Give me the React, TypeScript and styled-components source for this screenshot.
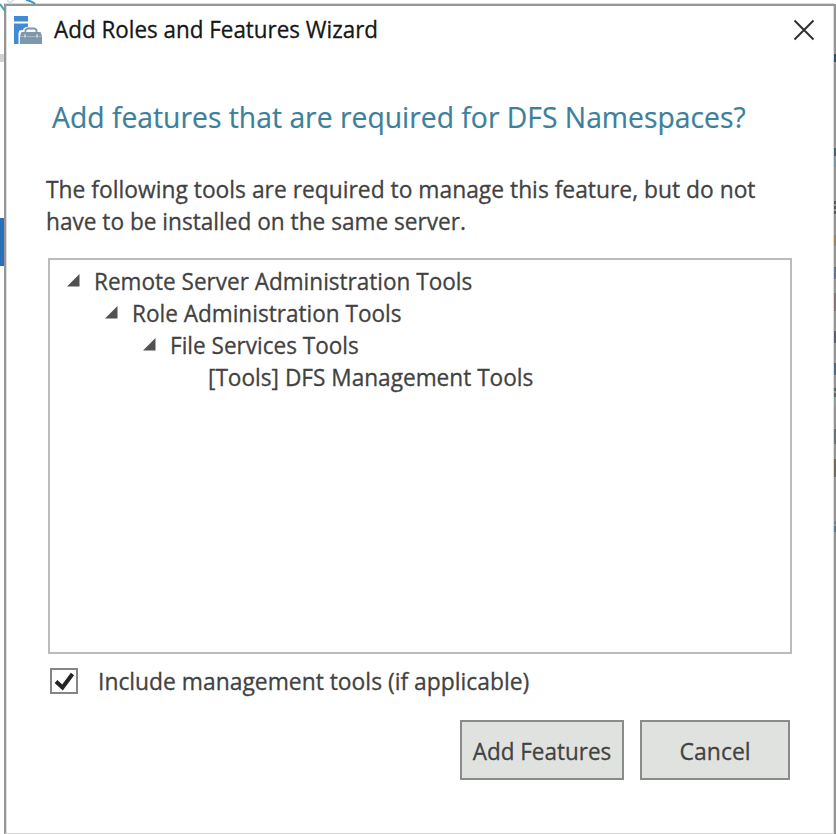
import React, { useState } from 'react';
import styled, { createGlobalStyle } from 'styled-components';

const GlobalStyle = createGlobalStyle`
  * { box-sizing: border-box; }
  body { margin: 0; background: #fff; overflow: hidden; }
`;

const Desktop = styled.div`
  position: relative;
  display: grid;
  grid-template-columns: 4px 830px 2px;
  width: 836px;
  height: 834px;
  overflow: hidden;
  font-family: 'Open Sans', 'Noto Sans', sans-serif;
  background: #fff;
`;

const LeftSliver = styled.div`
  display: flex;
  flex-direction: column;
  padding-top: 54px;
`;

const ToolbarEdge = styled.div`
  height: 8px;
  background: #d0d2d0;
`;

const SelectionEdge = styled.div`
  height: 48px;
  margin-top: 156px;
  background: #2a70b8;
`;

const BackArrow = styled.svg`
  position: absolute;
  left: 0;
  top: 0;
`;

const RightSliver = styled.div`
  margin-top: 4px;
  background: #969696;
`;

const Fleck = styled.div<{ $gap: number; $size: number; $tone: string }>`
  height: ${(p) => p.$size}px;
  margin-top: ${(p) => p.$gap}px;
  background: ${(p) => p.$tone};
`;

const FleckColumn = styled.div`
  display: flow-root;
`;

const Window = styled.section`
  display: flex;
  flex-direction: column;
  margin-top: 4px;
  border: solid #969696;
  border-width: 2px 0 0 2px;
  border-bottom: 1px solid #d4d4d4;
  box-shadow: 0 -1px 0 #dcdcdc, inset 1px 0 0 #dedede, inset -1px 0 0 #dedede;
`;

const TitleBar = styled.header`
  display: flex;
  align-items: flex-start;
  height: 64px;
  padding: 6px 18px 0 7px;
`;

const WizardIcon = styled.svg`
  flex: none;
  margin: 3px 11px 0 0;
`;

const Text = styled.span<{ $fit: number }>`
  display: block;
  font-size: 24px;
  line-height: 32px;
  white-space: nowrap;
  -webkit-text-stroke: 0.3px currentColor;
  transform: scaleX(${(p) => p.$fit});
  transform-origin: left;
`;

const Title = styled.div`
  flex: 1;
  display: flex;
  padding-top: 1px;
  color: #161616;
`;

const CloseButton = styled.button`
  width: 24px;
  height: 24px;
  margin-top: 6px;
  padding: 0;
  border: 0;
  background: none;
`;

const CloseIcon = styled.svg`
  display: block;
`;

const Heading = styled.h1`
  margin: 27px 0 0 46px;
  color: #3c809b;
  font-size: 29px;
  font-weight: 400;
  line-height: 40px;
  white-space: nowrap;
  -webkit-text-stroke: 0.2px currentColor;
  transform: scaleX(0.976);
  transform-origin: left;
`;

const Description = styled.div`
  margin: 36px 0 0 40px;
  color: #424242;
`;

const Tree = styled.ul`
  width: 744px;
  height: 396px;
  margin: 21px 0 0 42px;
  padding: 5px 0 0 16px;
  border: 2px solid #bcbcbc;
  list-style: none;
`;

const TreeRow = styled.li<{ $depth: number }>`
  display: flex;
  height: 32px;
  padding-left: ${(p) => p.$depth * 38}px;
  color: #424242;
`;

const Toggle = styled.svg`
  flex: none;
  margin: 8px 13px 0 0;
`;

const ToggleSpace = styled.span`
  width: 28px;
`;

const Option = styled.div`
  display: flex;
  height: 32px;
  margin: 11px 0 0 44px;
  color: #424242;
`;

const CheckBox = styled.button`
  width: 28px;
  height: 26px;
  margin: 3px 20px 0 0;
  padding: 0;
  border: 2px solid #858585;
  background: #fff;
`;

const CheckMark = styled.svg`
  display: block;
`;

const Actions = styled.footer`
  display: flex;
  justify-content: flex-end;
  gap: 16px;
  margin: 23px 44px 0 0;
`;

const ActionButton = styled.button<{ $width: number }>`
  display: flex;
  justify-content: center;
  width: ${(p) => p.$width}px;
  height: 60px;
  padding: 13px 0 0;
  border: 2px solid #8a8c8a;
  background: #e0e2df;
  color: #424242;
  font-family: inherit;
`;

const ButtonText = styled(Text)`
  transform-origin: center;
`;

const tree = [
  { label: 'Remote Server Administration Tools', fit: 0.939, open: true },
  { label: 'Role Administration Tools', fit: 0.94, open: true },
  { label: 'File Services Tools', fit: 0.939, open: true },
  { label: '[Tools] DFS Management Tools', fit: 0.943, open: false },
];

const flecks: [number, number, string][] = [
  [50, 8, '#2c5564'],
  [86, 8, '#4a6570'],
  [0, 11, '#7797a5'],
  [34, 3, '#555'],
  [2, 3, '#555'],
  [2, 3, '#555'],
  [21, 11, '#9a8460'],
  [21, 12, '#6a7195'],
  [14, 18, '#837578'],
  [20, 12, '#5e5f69'],
  [20, 12, '#536a80'],
  [13, 3, '#5c6663'],
  [2, 4, '#5c6663'],
  [0, 8, '#8ea09b'],
  [24, 15, '#6d7174'],
  [15, 18, '#706a5e'],
  [44, 3, '#718a99'],
  [2, 6, '#667784'],
];

export default function App() {
  const [checked, setChecked] = useState(true);

  return (
    <>
      <GlobalStyle />
      <Desktop>
        <LeftSliver>
          <ToolbarEdge />
          <SelectionEdge />
        </LeftSliver>
        <Window>
          <TitleBar>
            <WizardIcon width="30" height="30" viewBox="0 0 30 30">
              <path d="M1 1H15V6.500H1Z M1 8.500H15V11.500L11 13L10 15L6.500 15.500L5.500 18V29H1Z" fill="#418bd4" />
              <path d="M7 21L8.500 17H27.500L29 21V29H7Z" fill="#7d98ac" />
              <path d="M12.500 17.500V15L14.500 13.500H21.500L23.500 15V17.500" fill="none" stroke="#7d98ac" strokeWidth="1.800" />
              <path d="M7 21.500H10.500M13.500 21.500H22.500M25.500 21.500H29" fill="none" stroke="#a9bac7" strokeWidth="1" />
              <path d="M12 19.500V22.500M24 19.500V22.500" stroke="#e4eaf0" strokeWidth="1.400" />
            </WizardIcon>
            <Title>
              <Text $fit={0.934}>Add Roles and Features Wizard</Text>
            </Title>
            <CloseButton aria-label="Close">
              <CloseIcon width="24" height="24" viewBox="0 0 24 24">
                <path d="M2.500 2.500L21.500 21.500M21.500 2.500L2.500 21.500" stroke="#303030" strokeWidth="2" />
              </CloseIcon>
            </CloseButton>
          </TitleBar>
          <Heading>Add features that are required for DFS Namespaces?</Heading>
          <Description>
            <Text $fit={0.951}>The following tools are required to manage this feature, but do not</Text>
            <Text $fit={0.943}>have to be installed on the same server.</Text>
          </Description>
          <Tree>
            {tree.map((item, depth) => (
              <TreeRow key={item.label} $depth={depth}>
                {item.open ? (
                  <Toggle width="15" height="15" viewBox="0 0 15 15">
                    <path d="M1 13.500L13.500 1V13.500Z" fill="#505250" />
                  </Toggle>
                ) : (
                  <ToggleSpace />
                )}
                <Text $fit={item.fit}>{item.label}</Text>
              </TreeRow>
            ))}
          </Tree>
          <Option>
            <CheckBox role="checkbox" aria-checked={checked} aria-label="Include management tools" onClick={() => setChecked(!checked)}>
              {checked && (
                <CheckMark width="24" height="22" viewBox="0 0 24 22">
                  <path d="M4 11.500L10.500 17.500L20.500 4" fill="none" stroke="#242424" strokeWidth="4" />
                </CheckMark>
              )}
            </CheckBox>
            <Text $fit={0.952}>Include management tools (if applicable)</Text>
          </Option>
          <Actions>
            <ActionButton $width={164}>
              <ButtonText $fit={0.936}>Add Features</ButtonText>
            </ActionButton>
            <ActionButton $width={150}>
              <ButtonText $fit={0.957}>Cancel</ButtonText>
            </ActionButton>
          </Actions>
        </Window>
        <RightSliver>
          <FleckColumn>
            {flecks.map(([gap, size, tone], i) => (
              <Fleck key={i} $gap={gap} $size={size} $tone={tone} />
            ))}
          </FleckColumn>
        </RightSliver>
        <BackArrow width="38" height="12" viewBox="0 0 38 12">
          <path d="M0 4L5 11" stroke="#4b9fc4" strokeWidth="2" />
          <path d="M7 0L10 3L14 0" fill="none" stroke="#c3e0ee" strokeWidth="1.500" />
          <path d="M26 0Q32 1 35 4" fill="none" stroke="#3f95bd" strokeWidth="2" />
        </BackArrow>
      </Desktop>
    </>
  );
}
